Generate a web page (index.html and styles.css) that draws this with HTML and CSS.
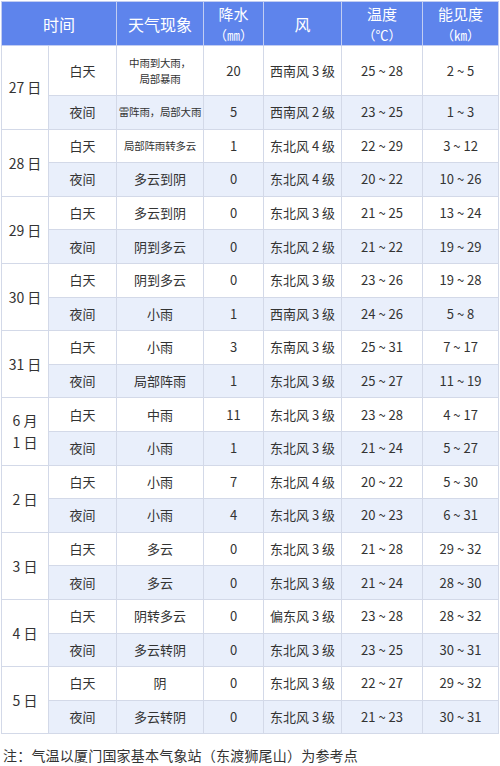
FILE: index.html
```html
<!DOCTYPE html>
<html lang="zh">
<head>
<meta charset="utf-8">
<link rel="stylesheet" href="styles.css">
</head>
<body>
<table class="wx">
  <colgroup>
    <col class="c-date"><col class="c-part"><col class="c-cond"><col class="c-rain"><col class="c-wind"><col class="c-temp"><col class="c-vis">
  </colgroup>
  <thead>
    <tr>
      <th colspan="2">时间</th>
      <th>天气现象</th>
      <th><span class="hl">降水</span><span class="unit">（㎜）</span></th>
      <th>风</th>
      <th><span class="hl">温度</span><span class="unit">（℃）</span></th>
      <th><span class="hl">能见度</span><span class="unit">（㎞）</span></th>
    </tr>
  </thead>
  <tbody>
    <tr class="day first"><td rowspan="2" class="date">27 日</td><td>白天</td><td class="small">中雨到大雨，<br>局部暴雨</td><td>20</td><td>西南风 3 级</td><td>25 ~ 28</td><td>2 ~ 5</td></tr>
    <tr class="night"><td>夜间</td><td class="small">雷阵雨，局部大雨</td><td>5</td><td>西南风 2 级</td><td>23 ~ 25</td><td>1 ~ 3</td></tr>

    <tr class="day"><td rowspan="2" class="date">28 日</td><td>白天</td><td class="small">局部阵雨转多云</td><td>1</td><td>东北风 4 级</td><td>22 ~ 29</td><td>3 ~ 12</td></tr>
    <tr class="night"><td>夜间</td><td>多云到阴</td><td>0</td><td>东北风 4 级</td><td>20 ~ 22</td><td>10 ~ 26</td></tr>

    <tr class="day"><td rowspan="2" class="date">29 日</td><td>白天</td><td>多云到阴</td><td>0</td><td>东北风 3 级</td><td>21 ~ 25</td><td>13 ~ 24</td></tr>
    <tr class="night"><td>夜间</td><td>阴到多云</td><td>0</td><td>东北风 2 级</td><td>21 ~ 22</td><td>19 ~ 29</td></tr>

    <tr class="day"><td rowspan="2" class="date">30 日</td><td>白天</td><td>阴到多云</td><td>0</td><td>东北风 3 级</td><td>23 ~ 26</td><td>19 ~ 28</td></tr>
    <tr class="night"><td>夜间</td><td>小雨</td><td>1</td><td>西南风 3 级</td><td>24 ~ 26</td><td>5 ~ 8</td></tr>

    <tr class="day"><td rowspan="2" class="date">31 日</td><td>白天</td><td>小雨</td><td>3</td><td>东南风 3 级</td><td>25 ~ 31</td><td>7 ~ 17</td></tr>
    <tr class="night"><td>夜间</td><td>局部阵雨</td><td>1</td><td>东北风 3 级</td><td>25 ~ 27</td><td>11 ~ 19</td></tr>

    <tr class="day"><td rowspan="2" class="date">6 月<br>1 日</td><td>白天</td><td>中雨</td><td>11</td><td>东北风 3 级</td><td>23 ~ 28</td><td>4 ~ 17</td></tr>
    <tr class="night"><td>夜间</td><td>小雨</td><td>1</td><td>东北风 3 级</td><td>21 ~ 24</td><td>5 ~ 27</td></tr>

    <tr class="day"><td rowspan="2" class="date">2 日</td><td>白天</td><td>小雨</td><td>7</td><td>东北风 4 级</td><td>20 ~ 22</td><td>5 ~ 30</td></tr>
    <tr class="night"><td>夜间</td><td>小雨</td><td>4</td><td>东北风 3 级</td><td>20 ~ 23</td><td>6 ~ 31</td></tr>

    <tr class="day"><td rowspan="2" class="date">3 日</td><td>白天</td><td>多云</td><td>0</td><td>东北风 3 级</td><td>21 ~ 28</td><td>29 ~ 32</td></tr>
    <tr class="night"><td>夜间</td><td>多云</td><td>0</td><td>东北风 3 级</td><td>21 ~ 24</td><td>28 ~ 30</td></tr>

    <tr class="day"><td rowspan="2" class="date">4 日</td><td>白天</td><td>阴转多云</td><td>0</td><td>偏东风 3 级</td><td>23 ~ 28</td><td>28 ~ 32</td></tr>
    <tr class="night"><td>夜间</td><td>多云转阴</td><td>0</td><td>东北风 3 级</td><td>23 ~ 25</td><td>30 ~ 31</td></tr>

    <tr class="day"><td rowspan="2" class="date">5 日</td><td>白天</td><td>阴</td><td>0</td><td>东北风 3 级</td><td>22 ~ 27</td><td>29 ~ 32</td></tr>
    <tr class="night"><td>夜间</td><td>多云转阴</td><td>0</td><td>东北风 3 级</td><td>21 ~ 23</td><td>30 ~ 31</td></tr>
  </tbody>
</table>
<p class="note">注：气温以厦门国家基本气象站（东渡狮尾山）为参考点</p>
</body>
</html>
```
FILE: styles.css
```css
html, body {
  margin: 0;
  padding: 0;
  background: #ffffff;
}
body {
  font-family: "Noto Sans CJK SC", "Noto Sans", sans-serif;
  color: #333333;
}
.wx {
  border-collapse: collapse;
  table-layout: fixed;
  width: 497px;
  margin: 1px 0 0 1px;
}
.c-date { width: 47px; }
.c-part { width: 68px; }
.c-cond { width: 87px; }
.c-rain { width: 60px; }
.c-wind { width: 78px; }
.c-temp { width: 81px; }
.c-vis { width: 76px; }

.wx th, .wx td {
  border: 1px solid #d3d9e8;
  text-align: center;
  vertical-align: middle;
  padding: 0;
}
.wx th {
  background: #5e84ec;
  color: #ffffff;
  font-weight: normal;
  font-size: 16px;
  line-height: 20px;
  height: 43px;
  border-color: #c2cdf2;
}
.wx th .hl {
  display: block;
  font-size: 15px;
  line-height: 22px;
}
.wx th .unit {
  display: block;
  font-size: 13px;
  line-height: 19px;
}
.wx td {
  font-size: 13px;
  line-height: 16px;
  height: 32.6px;
}
.wx tr.first td {
  height: 49px;
}
.wx tr.night td {
  background: #e9effb;
}
.wx td.date {
  background: #ffffff;
  font-size: 14px;
  line-height: 22px;
}
.wx td.small {
  font-size: 10.5px;
  line-height: 16px;
  letter-spacing: -0.2px;
}
.note {
  margin: 12px 0 0 3px;
  font-size: 14px;
  line-height: 18px;
  letter-spacing: 0.2px;
  color: #333333;
}
```
